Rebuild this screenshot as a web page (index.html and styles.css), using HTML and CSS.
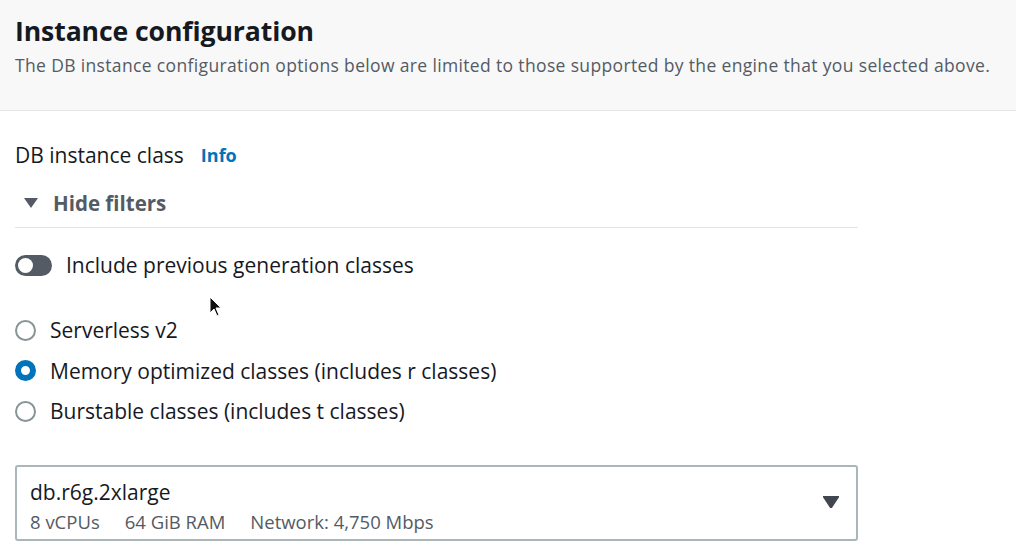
FILE: index.html
```html
<!DOCTYPE html>
<html>
<head>
<meta charset="utf-8">
<link rel="stylesheet" href="styles.css">
</head>
<body>
<div class="header">
  <h1 class="title">Instance configuration</h1>
  <p class="desc">The DB instance configuration options below are limited to those supported by the engine that you selected above.</p>
</div>
<div class="content">
  <div class="label-row"><span class="label">DB instance class</span><span class="info">Info</span></div>
  <div class="filters-head">
    <svg class="caret" width="14" height="10" viewBox="0 0 14 10"><polygon points="0,0 14,0 7,10" fill="#545b64"/></svg>
    <span>Hide filters</span>
  </div>
  <div class="divider"></div>
  <div class="toggle-row">
    <span class="toggle"><span class="knob"></span></span>
    <span>Include previous generation classes</span>
  </div>
  <div class="radios">
    <div class="radio-row"><span class="radio"></span><span>Serverless v2</span></div>
    <div class="radio-row"><span class="radio checked"></span><span>Memory optimized classes (includes r classes)</span></div>
    <div class="radio-row"><span class="radio"></span><span>Burstable classes (includes t classes)</span></div>
  </div>
  <div class="select">
    <div class="select-text">
      <div class="sel-main">db.r6g.2xlarge</div>
      <div class="sel-sub"><span>8 vCPUs</span><span>64 GiB RAM</span><span>Network: 4,750 Mbps</span></div>
    </div>
    <svg class="sel-caret" width="16" height="12" viewBox="0 0 16 12"><polygon points="0,0 16,0 8,12" fill="#414750" stroke="#414750" stroke-width="1.5" stroke-linejoin="round"/></svg>
  </div>
</div>
<svg class="cursor" width="14" height="22" viewBox="0 0 14 22"><path d="M1,1 L1,17 L5,13 L8,20 L10,19 L7,12 L12,12 Z" fill="#111" stroke="#fff" stroke-width="1"/></svg>
</body>
</html>
```
FILE: styles.css
```css
* { box-sizing: border-box; }
html, body { margin: 0; padding: 0; background: #fff; }
body {
  font-family: "Open Sans", "Noto Sans", sans-serif;
  color: #16191f;
  width: 1016px;
  height: 559px;
  overflow: hidden;
  position: relative;
}
.header {
  background: #f8f8f8;
  border-bottom: 1px solid #e6e6e6;
  height: 111px;
  padding: 13px 15px 0;
}
.title {
  margin: 0;
  font-size: 26.6px;
  font-weight: 700;
  line-height: 36px;
  letter-spacing: -0.1px;
}
.desc {
  margin: 5px 0 0;
  font-size: 17.5px;
  line-height: 22px;
  color: #545b64;
  letter-spacing: 0.35px;
  white-space: nowrap;
}
.content {
  padding: 0 15px;
  width: 873px;
  font-size: 21px;
}
.label-row {
  display: flex;
  align-items: center;
  gap: 17px;
  height: 30px;
  margin-top: 29px;
}
.info {
  color: #0073bb;
  font-weight: 700;
  font-size: 18px;
}
.filters-head {
  display: flex;
  align-items: center;
  gap: 15px;
  height: 30px;
  margin-top: 18px;
  padding-left: 9px;
  font-weight: 700;
  font-size: 20.5px;
  color: #545b64;
}
.divider {
  height: 1px;
  background: #e4e4e4;
  margin-top: 9px;
}
.toggle-row {
  display: flex;
  align-items: center;
  gap: 14px;
  height: 30px;
  margin-top: 22px;
  color: #16191f;
}
.toggle {
  width: 37px;
  height: 21px;
  border-radius: 11px;
  background: #545b64;
  position: relative;
  display: inline-block;
}
.knob {
  position: absolute;
  left: 3px;
  top: 3px;
  width: 15px;
  height: 15px;
  border-radius: 50%;
  background: #fff;
}
.radios {
  margin-top: 35px;
  display: flex;
  flex-direction: column;
  gap: 10.5px;
}
.radio-row {
  display: flex;
  align-items: center;
  gap: 14px;
  height: 30px;
}
.radio {
  width: 21px;
  height: 21px;
  border-radius: 50%;
  border: 2px solid #879596;
  background: #fff;
  display: inline-block;
  flex: none;
}
.radio.checked {
  border: 6px solid #0073bb;
}
.select {
  margin-top: 39px;
  height: 76px;
  border: 2px solid #aab7b8;
  border-radius: 3px;
  display: flex;
  align-items: center;
  justify-content: space-between;
  padding: 0 17px 0 13px;
}
.select-text {
  margin-top: 6px;
}
.sel-main {
  font-size: 21px;
  line-height: 28px;
}
.sel-sub {
  display: flex;
  gap: 25px;
  font-size: 18.5px;
  line-height: 26px;
  color: #545b64;
  margin-top: 3px;
}
.sel-caret {
  margin-top: -2px;
}
.cursor {
  position: absolute;
  left: 209px;
  top: 296px;
}
```
